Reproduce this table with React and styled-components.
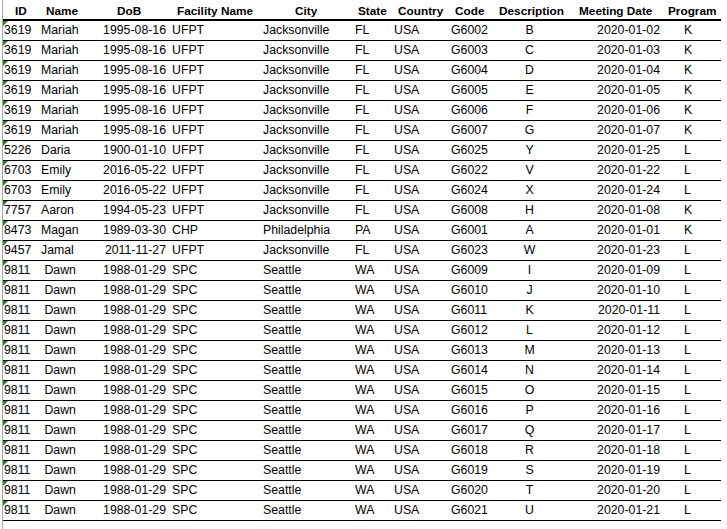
import React from 'react';
import styled, { createGlobalStyle } from 'styled-components';

const GlobalStyle = createGlobalStyle`
    body {
        margin: 0;
        background: #ffffff;
        font-family: "Liberation Sans", Arial, sans-serif;
        color: #000000;
    }
`

// column widths + where the text sits inside each column (header / data)
const columns = [
    { key: 'id', title: 'ID', w: 35, hp: 12, dp: 1 },
    { key: 'name', title: 'Name', w: 60, hp: 8, dp: 3 },
    { key: 'dob', title: 'DoB', w: 70, hp: 19, dp: 2, align: 'right' },
    { key: 'facility', title: 'Facility Name', w: 92, hp: 9, dp: 4 },
    { key: 'city', title: 'City', w: 92, hp: 35, dp: 3 },
    { key: 'state', title: 'State', w: 39, hp: 6, dp: 3 },
    { key: 'country', title: 'Country', w: 56, hp: 7, dp: 3 },
    { key: 'code', title: 'Code', w: 48, hp: 8, dp: 4 },
    { key: 'desc', title: 'Description', w: 77, hp: 4, dp: 8, align: 'center' },
    { key: 'meeting', title: 'Meeting Date', w: 92, hp: 7, dp: 4, align: 'right' },
    { key: 'program', title: 'Program', w: 57, hp: 4, dp: 20 },
]

const template = columns.map(c => `${c.w}px`).join(' ')
const tableWidth = columns.reduce((sum, c) => sum + c.w, 0)

const mk = (id, name, dob, facility, city, state, code, desc, meeting, program) => ({
    id, name, dob, facility, city, state, country: 'USA', code, desc, meeting, program
})

const rows = [
    mk('3619', 'Mariah', '1995-08-16', 'UFPT', 'Jacksonville', 'FL', 'G6002', 'B', '2020-01-02', 'K'),
    mk('3619', 'Mariah', '1995-08-16', 'UFPT', 'Jacksonville', 'FL', 'G6003', 'C', '2020-01-03', 'K'),
    mk('3619', 'Mariah', '1995-08-16', 'UFPT', 'Jacksonville', 'FL', 'G6004', 'D', '2020-01-04', 'K'),
    mk('3619', 'Mariah', '1995-08-16', 'UFPT', 'Jacksonville', 'FL', 'G6005', 'E', '2020-01-05', 'K'),
    mk('3619', 'Mariah', '1995-08-16', 'UFPT', 'Jacksonville', 'FL', 'G6006', 'F', '2020-01-06', 'K'),
    mk('3619', 'Mariah', '1995-08-16', 'UFPT', 'Jacksonville', 'FL', 'G6007', 'G', '2020-01-07', 'K'),
    mk('5226', 'Daria', '1900-01-10', 'UFPT', 'Jacksonville', 'FL', 'G6025', 'Y', '2020-01-25', 'L'),
    mk('6703', 'Emily', '2016-05-22', 'UFPT', 'Jacksonville', 'FL', 'G6022', 'V', '2020-01-22', 'L'),
    mk('6703', 'Emily', '2016-05-22', 'UFPT', 'Jacksonville', 'FL', 'G6024', 'X', '2020-01-24', 'L'),
    mk('7757', 'Aaron', '1994-05-23', 'UFPT', 'Jacksonville', 'FL', 'G6008', 'H', '2020-01-08', 'K'),
    mk('8473', 'Magan', '1989-03-30', 'CHP', 'Philadelphia', 'PA', 'G6001', 'A', '2020-01-01', 'K'),
    mk('9457', 'Jamal', '2011-11-27', 'UFPT', 'Jacksonville', 'FL', 'G6023', 'W', '2020-01-23', 'L'),
    ...'IJKLMNOPQRSTU'.split('').map((letter, i) => {
        const dd = String(9 + i).padStart(2, '0')
        return mk('9811', ' Dawn', '1988-01-29', 'SPC', 'Seattle', 'WA', `G60${dd}`, letter, `2020-01-${dd}`, 'L')
    }),
]

const Sheet = styled.div`
    margin-left: 2px;
    border-left: 1px solid #a8a8a8;
    min-height: 100vh;
    box-sizing: border-box;
`

const HeaderRow = styled.div`
    display: grid;
    grid-template-columns: ${template};
    width: ${tableWidth}px;
    height: 21px;
    box-sizing: border-box;
    border-bottom: 2px solid #000000;
`

const Row = styled.div`
    display: grid;
    grid-template-columns: ${template};
    width: ${tableWidth}px;
    height: 20px;
    box-sizing: border-box;
    border-bottom: 1px solid #000000;
`

const HeadCell = styled.div`
    padding-left: ${({ $pad }) => $pad}px;
    padding-top: 2px;
    font-size: 11.8px;
    font-weight: bold;
    line-height: 18px;
    white-space: nowrap;
`

const Cell = styled.div`
    position: relative;
    font-size: 12.3px;
    line-height: 19px;
    white-space: pre;
    text-align: ${({ $align }) => $align || 'left'};
    padding-left: ${({ $align, $pad }) => ($align === 'left' || !$align ? $pad : 0)}px;
    padding-right: ${({ $align, $pad }) => ($align === 'right' || $align === 'center' ? $pad : 0)}px;

    /* excel "number stored as text" marker */
    ${({ $flag }) => $flag && `
        &::before {
            content: '';
            position: absolute;
            left: 0;
            top: 0;
            border-top: 5px solid #1f8a1f;
            border-right: 5px solid transparent;
        }
    `}
`

export default function App() {
    return (
        <>
            <GlobalStyle />
            <Sheet>
                <HeaderRow>
                    {columns.map(c => (
                        <HeadCell key={c.key} $pad={c.hp}>{c.title}</HeadCell>
                    ))}
                </HeaderRow>
                {rows.map((r, i) => (
                    <Row key={i}>
                        {columns.map(c => (
                            <Cell key={c.key} $pad={c.dp} $align={c.align} $flag={c.key === 'id'}>
                                {r[c.key]}
                            </Cell>
                        ))}
                    </Row>
                ))}
            </Sheet>
        </>
    )
}
